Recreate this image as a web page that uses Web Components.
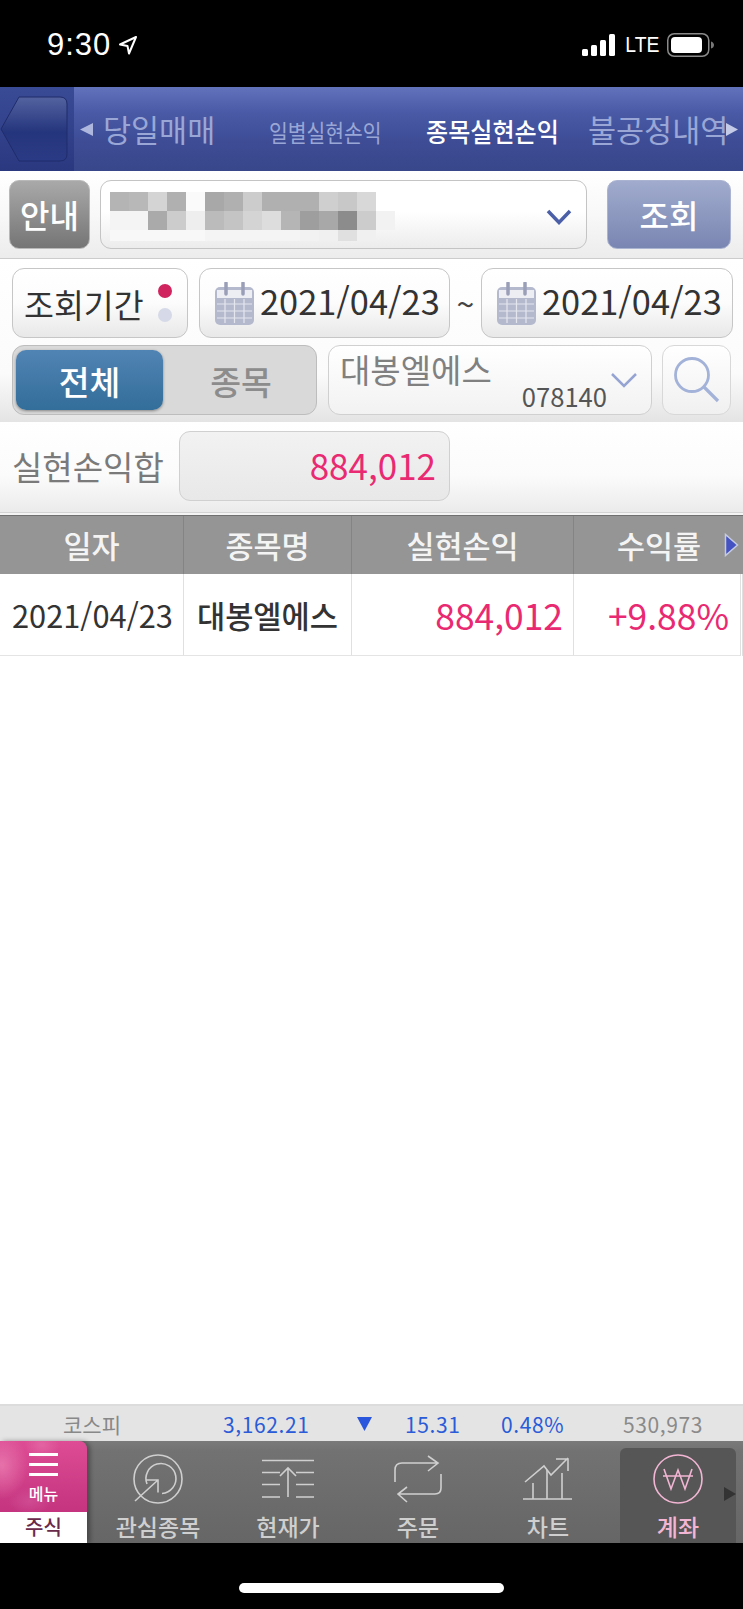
<!doctype html>
<html lang="ko">
<head>
<meta charset="utf-8">
<title>종목실현손익</title>
<style>
  html, body { margin: 0; height: 100%; background: #000; }
  body {
    width: 743px;
    height: 1609px;
    overflow: hidden;
    display: flex;
    flex-direction: column;
    font-family: "Noto Sans CJK KR", "Noto Sans", sans-serif;
  }
  app-grid { flex: 1; }
</style>
</head>
<body>
<app-status></app-status>
<app-nav></app-nav>
<app-account></app-account>
<app-query></app-query>
<app-sum></app-sum>
<app-grid></app-grid>
<app-ticker></app-ticker>
<app-tabbar></app-tabbar>
<app-home></app-home>

<script>
const PINK = "#e92a72";

class AppStatus extends HTMLElement {
  constructor() {
    super();
    this.attachShadow({ mode: "open" });
  }

  connectedCallback() {
    this.shadowRoot.innerHTML = /* html */`
    <style>
      :host {
        display: flex;
        align-items: center;
        height: 87px;
        padding: 3px 28px 0 47px;
        box-sizing: border-box;
        background: #000;
        color: #fff;
        font-family: "Liberation Sans", sans-serif;
      }
      .time { font-size: 31px; letter-spacing: 1px; }
      .loc { margin-left: 7px; }
      .right { margin-left: auto; display: flex; align-items: center; }
      .lte { font-size: 22px; margin: 0 5px 0 8px; transform: scaleX(.88); }
    </style>
    <span class="time">9:30</span>
    <svg class="loc" width="20" height="20" viewBox="0 0 20 20"><path d="M18 2 2 9.500l7.500 1.500L11 18.500z" fill="none" stroke="#fff" stroke-width="2" stroke-linejoin="round"/></svg>
    <div class="right">
      <svg width="33" height="22" viewBox="0 0 33 22" fill="#fff">
        <rect x="0" y="15" width="6" height="7" rx="1.500"/>
        <rect x="9" y="11" width="6" height="11" rx="1.500"/>
        <rect x="18" y="6" width="6" height="16" rx="1.500"/>
        <rect x="27" y="0" width="6" height="22" rx="1.500"/>
      </svg>
      <span class="lte">LTE</span>
      <svg width="48" height="24" viewBox="0 0 48 24">
        <rect x=".75" y=".75" width="41" height="22.500" rx="6.500" fill="none" stroke="#8a8a8a" stroke-width="1.500"/>
        <rect x="4" y="4" width="31" height="16" rx="4" fill="#fff"/>
        <path d="M44 8.500c2 .5 3 2 3 3.500s-1 3-3 3.500z" fill="#777"/>
      </svg>
    </div>`;
  }
}

class AppNav extends HTMLElement {
  constructor() {
    super();
    this.attachShadow({ mode: "open" });
  }

  connectedCallback() {
    this.shadowRoot.innerHTML = /* html */`
    <style>
      :host {
        display: grid;
        grid-template-columns: 74px 6px 23px 166px 157px 162px 1fr;
        grid-template-rows: 84px;
        align-items: center;
        height: 84px;
        background: linear-gradient(#6272bb, #4a5aa6 30%, #3d4c95 65%, #38478a);
        color: #9aa7d6;
        font-size: 30.500px;
        white-space: nowrap;
        overflow: hidden;
      }
      .back {
        align-self: stretch;
        display: flex;
        align-items: center;
        background: linear-gradient(#3a4b96, #2a3880);
      }
      .arrow { grid-column: 3; }
      .small, .on { display: inline-block; transform-origin: left center; }
      .small { font-size: 24px; transform: scaleX(.85); }
      .on { color: #fff; font-weight: 500; font-size: 26px; transform: scaleX(.925); }
      .last { display: flex; align-items: center; }
      .last span { width: 138px; flex: none; }
      .last svg { flex: none; }
    </style>
    <div class="back">
      <svg width="68" height="68" viewBox="0 0 68 68">
        <defs>
          <linearGradient id="b" x1="0" x2="0" y1="0" y2="1">
            <stop offset="0" stop-color="#53629f"/>
            <stop offset=".55" stop-color="#25357d"/>
            <stop offset="1" stop-color="#2b3a84"/>
          </linearGradient>
        </defs>
        <path d="M1 34 19 2h41q7 0 7 7v50q0 7-7 7H19z" fill="url(#b)" stroke="#1f2c6b" stroke-width="1"/>
      </svg>
    </div>
    <svg class="arrow" width="13" height="13" viewBox="0 0 13 13"><path d="M13 0v13L0 6.500z" fill="#aeb8de"/></svg>
    <span>당일매매</span>
    <span><span class="small">일별실현손익</span></span>
    <span><span class="on">종목실현손익</span></span>
    <div class="last">
      <span>불공정내역</span>
      <svg width="12" height="13" viewBox="0 0 12 13"><path d="M0 0v13l12-6.500z" fill="#c3cbe8"/></svg>
    </div>`;
  }
}

class AppAccount extends HTMLElement {
  constructor() {
    super();
    this.attachShadow({ mode: "open" });
  }

  static get blur() {
    // pixelated account number: column gray values per row
    return [
      [19, ["b4", "b8", "d4", "b0", "fa", "a8", "b0", "cc", "b0", "b0", "b0", "cf", "c8", "d8"]],
      [19, ["f4", "f4", "aa", "cc", "ee", "bb", "c4", "d4", "dd", "b5", "9e", "a8", "8c", "cc", "f2"]],
      [11, ["f8", "f8", "f8", "f8", "f8", "f4", "f4", "f4", "f4", "f4", "f2", "f0", "e0", "f0"]]
    ];
  }

  connectedCallback() {
    const cells = AppAccount.blur.map(([h, row]) =>
      `<div class="px" style="height:${h}px">${row.map(c => `<i style="background:#${c}${c}${c}"></i>`).join("")}</div>`
    ).join("");
    this.shadowRoot.innerHTML = /* html */`
    <style>
      :host {
        display: flex;
        height: 88px;
        box-sizing: border-box;
        padding: 9px 12px 9px 9px;
        background: linear-gradient(#fff, #f8f8f8 50%, #ececec);
        border-bottom: 1px solid #ccc;
        font-size: 32px;
        font-weight: 500;
      }
      .btn {
        display: flex;
        align-items: center;
        justify-content: center;
        border-radius: 10px;
        color: #fff;
        box-sizing: border-box;
        padding-bottom: 2px;
      }
      .info {
        width: 81px;
        background: linear-gradient(#a9a9a9, #757575);
        border: 1px solid #b8b8b8;
      }
      .field {
        width: 487px;
        margin-left: 10px;
        box-sizing: border-box;
        padding: 11px 0 0 9px;
        display: flex;
        border: 1.500px solid #c4c4c4;
        border-radius: 11px;
        background: linear-gradient(#fff 45%, #ececec);
      }
      .blur { flex: 1; }
      .px { display: flex; }
      .px i { width: 19px; flex: none; }
      .field svg { margin: 17px 14px 0 0; }
      .go {
        width: 124px;
        margin-left: 20px;
        background: linear-gradient(#a0abcd, #7a86b2);
        border: 1px solid #aab3d0;
      }
    </style>
    <div class="btn info">안내</div>
    <div class="field">
      <div class="blur">${cells}</div>
      <svg width="26" height="16" viewBox="0 0 26 16"><path d="M2 2 13 13.500 24 2" fill="none" stroke="#4a5fa8" stroke-width="3.500"/></svg>
    </div>
    <div class="btn go">조회</div>`;
  }
}

class AppDate extends HTMLElement {
  constructor() {
    super();
    this.attachShadow({ mode: "open" });
  }

  connectedCallback() {
    this.shadowRoot.innerHTML = /* html */`
    <style>
      :host {
        display: flex;
        align-items: center;
        box-sizing: border-box;
        height: 70px;
        padding-left: 15px;
        border: 1.500px solid #c6c6c6;
        border-radius: 12px;
        background: linear-gradient(#fff, #fcfcfc 50%, #e8e8e8);
        color: #333;
        font-size: 34.400px;
        white-space: nowrap;
      }
      svg { flex: none; margin-right: 6px; }
      .txt { margin-top: -6px; }
    </style>
    <svg width="39" height="43" viewBox="0 0 39 43">
      <rect x="0" y="5" width="39" height="38" rx="5" fill="#b5b9cd"/>
      <rect x="2" y="8" width="35" height="8" fill="#eceef4"/>
      <path d="M11 1v11M28 1v11" stroke="#9a9fb8" stroke-width="3.500" stroke-linecap="round"/>
      <path d="M2 22h35M2 29h35M2 36h35M10 17v24M19.500 17v24M29 17v24" stroke="#e4e6ee" stroke-width="1.200"/>
    </svg>
    <span class="txt"><slot></slot></span>`;
  }
}

class AppQuery extends HTMLElement {
  constructor() {
    super();
    this.attachShadow({ mode: "open" });
  }

  connectedCallback() {
    this.shadowRoot.innerHTML = /* html */`
    <style>
      :host {
        display: flex;
        flex-direction: column;
        gap: 7px;
        height: 163px;
        box-sizing: border-box;
        padding: 9px 10px 0 12px;
        background: linear-gradient(#fff, #fbfbfb 70%, #e4e4e4);
        font-size: 33.500px;
      }
      .row { display: flex; align-items: stretch; }
      .period {
        width: 176px;
        height: 70px;
        box-sizing: border-box;
        display: flex;
        align-items: center;
        padding-left: 11px;
        border: 1.500px solid #c6c6c6;
        border-radius: 12px;
        background: linear-gradient(#fff, #fcfcfc 50%, #e8e8e8);
        color: #333;
        font-size: 32.500px;
        white-space: nowrap;
      }
      .dots { margin-left: auto; margin-right: 15px; display: flex; flex-direction: column; gap: 10px; }
      .dots i { width: 14px; height: 14px; border-radius: 50%; background: #d6dae8; }
      .dots i:first-child { background: #d0245f; }
      app-date.d1 { width: 251px; margin-left: 11px; }
      app-date.d2 { width: 252px; }
      .tilde { width: 31px; text-align: center; color: #444; align-self: center; font-size: 32px; }
      .seg {
        width: 305px;
        height: 70px;
        box-sizing: border-box;
        padding: 4px 3px;
        display: flex;
        border: 1.500px solid #bdbdbd;
        border-radius: 12px;
        background: #d9d9d9;
      }
      .seg b, .seg span {
        display: flex;
        align-items: center;
        justify-content: center;
        font-weight: 500;
      }
      .seg b {
        width: 147px;
        color: #fff;
        border-radius: 10px;
        background: linear-gradient(#5084b4, #336d99);
        box-shadow: 0 1px 3px #0006;
      }
      .seg span { flex: 1; color: #8c8c8c; padding-left: 6px; }
      .stock {
        width: 324px;
        height: 70px;
        margin-left: 11px;
        box-sizing: border-box;
        padding: 3px 14px 0 11px;
        display: flex;
        border: 1.500px solid #d0d0d0;
        border-radius: 12px;
        background: linear-gradient(#fff, #f2f2f2);
        color: #808080;
      }
      .names { flex: 1; display: flex; flex-direction: column; line-height: 40px; font-size: 33px; white-space: nowrap; }
      .names small { align-self: flex-end; font-size: 25.600px; line-height: 22px; color: #555; margin: -4px 4px 0 0; }
      .stock svg { margin-top: 24px; }
      .search {
        width: 69px;
        height: 70px;
        margin-left: 10px;
        box-sizing: border-box;
        border: 1.500px solid #d8d8d8;
        border-radius: 12px;
        background: linear-gradient(#fff, #f0f0f0);
        display: flex;
        align-items: center;
        justify-content: center;
      }
    </style>
    <div class="row">
      <div class="period">조회기간<div class="dots"><i></i><i></i></div></div>
      <app-date class="d1">2021/04/23</app-date>
      <span class="tilde">~</span>
      <app-date class="d2">2021/04/23</app-date>
    </div>
    <div class="row">
      <div class="seg"><b>전체</b><span>종목</span></div>
      <div class="stock">
        <div class="names">대봉엘에스<small>078140</small></div>
        <svg width="26" height="15" viewBox="0 0 26 15"><path d="M1 1 13 13 25 1" fill="none" stroke="#95a4d2" stroke-width="2.500"/></svg>
      </div>
      <div class="search">
        <svg width="46" height="46" viewBox="0 0 46 46"><circle cx="18" cy="18" r="16.500" fill="none" stroke="#a3b2d8" stroke-width="2.800"/><path d="M30 30 44 44" stroke="#a3b2d8" stroke-width="3.200"/></svg>
      </div>
    </div>`;
  }
}

class AppSum extends HTMLElement {
  constructor() {
    super();
    this.attachShadow({ mode: "open" });
  }

  connectedCallback() {
    this.shadowRoot.innerHTML = /* html */`
    <style>
      :host {
        display: flex;
        align-items: center;
        height: 90px;
        box-sizing: border-box;
        padding: 0 0 2px 12px;
        background: linear-gradient(#fff, #fbfbfb 60%, #ebebeb);
        font-size: 33px;
        color: #7a7a7a;
      }
      span { width: 167px; white-space: nowrap; }
      .box {
        width: 271px;
        height: 70px;
        box-sizing: border-box;
        padding: 0 13px 3px 0;
        display: flex;
        align-items: center;
        justify-content: flex-end;
        border: 1.500px solid #d0d0d0;
        border-radius: 11px;
        background: linear-gradient(#f2f2f2, #e8e8e8);
        color: ${PINK};
        font-size: 35px;
      }
    </style>
    <span>실현손익합</span>
    <div class="box">884,012</div>`;
  }
}

class AppGrid extends HTMLElement {
  constructor() {
    super();
    this.attachShadow({ mode: "open" });
  }

  connectedCallback() {
    this.shadowRoot.innerHTML = /* html */`
    <style>
      :host {
        display: block;
        background: #fff;
        border-top: 1px solid #d4d4d4;
        font-size: 30.800px;
      }
      .rule { height: 2px; background: #f4f4f4; border-bottom: 1px solid #707070; }
      .grid { display: grid; grid-template-columns: 184px 168px 222px 167px 2px; }
      .head > * {
        height: 58px;
        display: flex;
        align-items: center;
        justify-content: center;
        background: #959595;
        color: #f4f4f4;
        border-right: 1px solid #848484;
        font-size: 30.500px;
        font-weight: 500;
        box-sizing: border-box;
        white-space: nowrap;
      }
      .head .more { border: 0; justify-content: flex-start; padding-left: 43px; gap: 23px; }
      .head svg { flex: none; }
      .body > * {
        height: 82px;
        display: flex;
        align-items: center;
        box-sizing: border-box;
        border-right: 1px solid #e0e0e0;
        border-bottom: 1px solid #e4e4e4;
        white-space: nowrap;
      }
      .date { padding-left: 12px; color: #333; }
      .name { justify-content: center; color: #333; font-size: 30.700px; font-weight: 500; }
      .num { justify-content: flex-end; color: ${PINK}; font-size: 35.400px; padding-right: 10px; }
      .rate { padding-right: 11px; }
      .pad { border-bottom: 0 !important; }
    </style>
    <div class="rule"></div>
    <div class="grid head">
      <div>일자</div><div>종목명</div><div>실현손익</div>
      <div class="more">수익률<svg width="15" height="24" viewBox="0 0 15 24"><path d="M1.500 1.500v21L13.500 12z" fill="#4553c2" stroke="#c6cbe0" stroke-width="1.500"/></svg></div>
      <div style="background:#959595;border:0"></div>
    </div>
    <div class="grid body">
      <div class="date">2021/04/23</div>
      <div class="name">대봉엘에스</div>
      <div class="num">884,012</div>
      <div class="num rate">+9.88%</div>
      <div class="pad"></div>
    </div>`;
  }
}

class AppTicker extends HTMLElement {
  constructor() {
    super();
    this.attachShadow({ mode: "open" });
  }

  connectedCallback() {
    this.shadowRoot.innerHTML = /* html */`
    <style>
      :host {
        display: grid;
        grid-template-columns: 223px 134px 48px 96px 122px 1fr;
        align-items: center;
        height: 37px;
        box-sizing: border-box;
        background: #e4e4e4;
        border-top: 2px solid #dcdcdc;
        color: #2a5bd8;
        font-size: 21px;
        letter-spacing: .6px;
      }
      .kospi { padding-left: 63px; color: #888; font-size: 21px; letter-spacing: 0; }
      .vol { color: #8a8a8a; }
    </style>
    <span class="kospi">코스피</span>
    <span>3,162.21</span>
    <svg width="15" height="14" viewBox="0 0 15 14"><path d="M0 0h15L7.500 14z" fill="#2a55dd"/></svg>
    <span>15.31</span>
    <span>0.48%</span>
    <span class="vol">530,973</span>`;
  }
}

class AppTab extends HTMLElement {
  constructor() {
    super();
    this.attachShadow({ mode: "open" });
  }

  connectedCallback() {
    this.shadowRoot.innerHTML = /* html */`
    <style>
      :host {
        width: 130px;
        height: 102px;
        box-sizing: border-box;
        padding-top: 10px;
        display: flex;
        flex-direction: column;
        align-items: center;
        color: #cfcfcf;
        font-size: 23px;
        font-weight: 500;
        white-space: nowrap;
      }
      :host([active]) {
        color: #f2b6d4;
        width: 116px;
        margin: 7px 7px 0;
        padding-top: 3px;
        height: 95px;
        background: #565656;
        border-radius: 6px 6px 0 0;
      }
      .icon { height: 56px; display: flex; align-items: center; justify-content: center; }
      .label { line-height: 30px; margin-top: 4px; }
    </style>
    <div class="icon"><slot name="icon"></slot></div>
    <div class="label"><slot></slot></div>`;
  }
}

class AppTabbar extends HTMLElement {
  constructor() {
    super();
    this.attachShadow({ mode: "open" });
  }

  connectedCallback() {
    this.shadowRoot.innerHTML = /* html */`
    <style>
      :host {
        display: flex;
        height: 102px;
        background: linear-gradient(#7a7a7a, #727272 10%, #666);
        position: relative;
      }
      .menu {
        width: 87px;
        flex: none;
        display: flex;
        flex-direction: column;
        border-top-right-radius: 8px;
        overflow: hidden;
        box-shadow: 3px 0 5px #0005;
        margin-right: 6px;
      }
      .top {
        flex: 1;
        display: flex;
        flex-direction: column;
        align-items: center;
        background:
          radial-gradient(ellipse 26px 34px at 2px 24px, #e672aa, transparent),
          radial-gradient(ellipse 18px 14px at 42px 4px, #e364a2, transparent),
          radial-gradient(ellipse 22px 14px at 30px 60px, #cf4b92, transparent),
          linear-gradient(#dd4c94, #c4347f);
        color: #fff;
        font-size: 16px;
        line-height: 18px;
        font-weight: 500;
      }
      .burger { display: flex; flex-direction: column; gap: 7px; margin: 12px 0 8px; }
      .burger i { display: block; width: 29px; height: 3px; background: #fff; }
      .stock {
        height: 31px;
        background: #fff;
        color: #6a2a4a;
        font-size: 20px;
        font-weight: 500;
        text-align: center;
        line-height: 30px;
      }
      .more { position: absolute; right: 7px; top: 46px; }
      svg { fill: none; stroke: #cfcfcf; stroke-width: 1.600; }
      .on { stroke: #f2b6d4; }
    </style>
    <div class="menu">
      <div class="top">
        <div class="burger"><i></i><i></i><i></i></div>
        메뉴
      </div>
      <div class="stock">주식</div>
    </div>
    <app-tab>
      <svg slot="icon" width="52" height="52" viewBox="0 0 52 52">
        <circle cx="26" cy="26" r="24"/>
        <path d="M15 31A15 15 0 1 1 30 40.500"/>
        <path d="M3 48 26 27M14 27H26V39.500"/>
      </svg>
      관심종목
    </app-tab>
    <app-tab>
      <svg slot="icon" width="52" height="40" viewBox="0 0 52 40">
        <path d="M0 1.500H52M0 13.500H18M34 13.500H52M0 25.500H18M34 25.500H52M0 38H18M34 38H52"/>
        <path d="M26 38V9M18 17 26 9 34 17"/>
      </svg>
      현재가
    </app-tab>
    <app-tab>
      <svg slot="icon" width="48" height="48" viewBox="0 0 48 48">
        <path d="M1 27V15Q1 8 8 8H44M34 1 44 8 34 16"/>
        <path d="M47 19V33Q47 39 41 39H4M13 32 4 39 13 47"/>
      </svg>
      주문
    </app-tab>
    <app-tab>
      <svg slot="icon" width="50" height="44" viewBox="0 0 50 44">
        <path d="M0 42H49M10 26V42M24 13V42M39 16V42"/>
        <path d="M2 25 21 9 28 18 45 1M33 2H45V14"/>
      </svg>
      차트
    </app-tab>
    <app-tab active>
      <svg slot="icon" class="on" width="52" height="52" viewBox="0 0 52 52">
        <circle cx="26" cy="26" r="24"/>
        <path d="M12 16 19 36 26 17 33 36 40 16M11 23H41"/>
      </svg>
      계좌
    </app-tab>
    <svg class="more" width="12" height="14" viewBox="0 0 12 14"><path d="M0 0v14l12-7z" fill="#333" stroke="none"/></svg>`;
  }
}

class AppHome extends HTMLElement {
  constructor() {
    super();
    this.attachShadow({ mode: "open" });
  }

  connectedCallback() {
    this.shadowRoot.innerHTML = /* html */`
    <style>
      :host {
        display: flex;
        justify-content: center;
        height: 66px;
        box-sizing: border-box;
        padding: 40px 0 0 0;
        background: #000;
      }
      div { width: 265px; height: 10px; border-radius: 5px; background: #fff; }
    </style>
    <div></div>`;
  }
}

customElements.define("app-status", AppStatus);
customElements.define("app-nav", AppNav);
customElements.define("app-account", AppAccount);
customElements.define("app-date", AppDate);
customElements.define("app-query", AppQuery);
customElements.define("app-sum", AppSum);
customElements.define("app-grid", AppGrid);
customElements.define("app-ticker", AppTicker);
customElements.define("app-tab", AppTab);
customElements.define("app-tabbar", AppTabbar);
customElements.define("app-home", AppHome);
</script>
</body>
</html>
